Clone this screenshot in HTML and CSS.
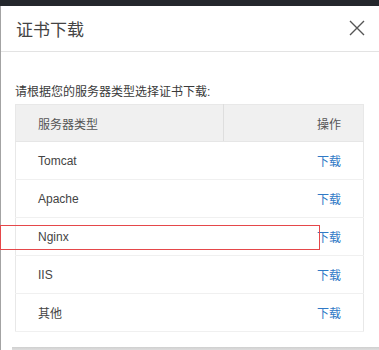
FILE: index.html
```html
<!DOCTYPE html>
<html lang="zh-CN">
<head>
  <meta charset="UTF-8" />
  <meta name="viewport" content="width=device-width, initial-scale=1.0"/>
  <title>证书下载</title>
  <link rel="stylesheet" href="styles.css">
</head>
<body>
  <div class="topbar"></div>
  <div class="dialog">
    <div class="dialog-head">
      <span class="dialog-title">证书下载</span>
      <svg class="close" width="16" height="16" viewBox="0 0 16 16">
        <path d="M1 1 L15 15 M15 1 L1 15" stroke="#555" stroke-width="1.4" fill="none"/>
      </svg>
    </div>
    <div class="dialog-body">
      <p class="intro">请根据您的服务器类型选择证书下载:</p>
      <table class="cert-table">
        <thead>
          <tr><th class="col-type">服务器类型</th><th class="col-op">操作</th></tr>
        </thead>
        <tbody>
          <tr><td>Tomcat</td><td class="col-op"><a href="#">下载</a></td></tr>
          <tr><td>Apache</td><td class="col-op"><a href="#">下载</a></td></tr>
          <tr><td>Nginx</td><td class="col-op"><a href="#">下载</a></td></tr>
          <tr><td>IIS</td><td class="col-op"><a href="#">下载</a></td></tr>
          <tr><td>其他</td><td class="col-op"><a href="#">下载</a></td></tr>
        </tbody>
      </table>
    </div>
    <div class="next-card"></div>
  </div>
  <div class="highlight"></div>
</body>
</html>
```

FILE: styles.css
```css
body {
  margin: 0;
  background: #fff;
  font-family: "Liberation Sans", "Noto Sans CJK SC", sans-serif;
  color: #333;
  height: 350px;
  overflow: hidden;
}
.topbar { height: 6px; background: #24272c; }
.dialog {
  border-left: 1px solid #a3a3a3;
  height: 344px;
  overflow: hidden;
}
.dialog-head {
  height: 45px;
  border-bottom: 1px solid #e3e3e3;
  display: flex;
  align-items: center;
  justify-content: space-between;
  padding: 0 14px 0 15px;
}
.dialog-title { font-size: 17px; color: #444; }
.close { display: block; margin-top: -1px; }
.dialog-body { padding: 0 14px; }
.intro {
  margin: 31px 0 3px;
  font-size: 12px;
  line-height: 18px;
  color: #3a3a3a;
}
.cert-table {
  width: 349px;
  border-collapse: collapse;
  border: 1px solid #e8e8e8;
  font-size: 12px;
}
.cert-table th {
  height: 36px;
  background: #f0f0f0;
  font-weight: normal;
  color: #555;
  text-align: left;
  padding: 0 22px;
  border-bottom: 1px solid #e6e6e6;
}
.cert-table th.col-type { width: 163px; border-right: 1px solid #dedede; }
.cert-table td {
  height: 37px;
  padding: 0 22px;
  border-bottom: 1px solid #f0f0f0;
  color: #444;
}
.cert-table .col-op { text-align: right; }
.cert-table a { color: #3079c6; text-decoration: none; }
.next-card {
  margin: 15px 0 0 11px;
  height: 6px;
  background: linear-gradient(#cfcfcf, #ececec);
}
.highlight {
  position: absolute;
  left: 0;
  top: 225px;
  width: 318px;
  height: 23px;
  border: 1px solid #e5474a;
}
```
